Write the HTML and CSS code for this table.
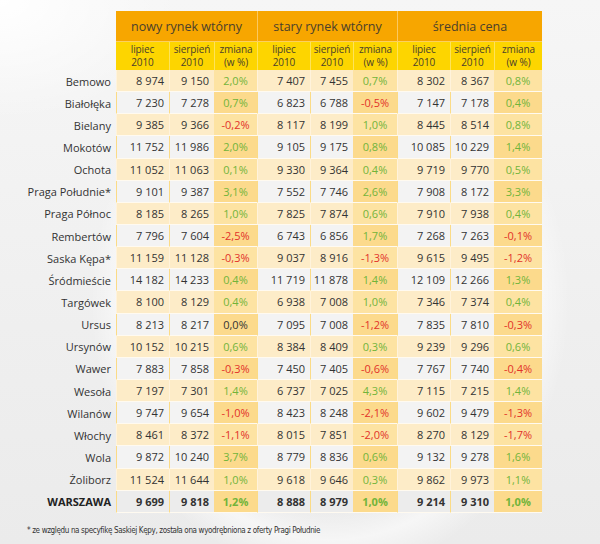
FILE: index.html
```html
<!DOCTYPE html>
<html lang="pl">
<head>
<meta charset="utf-8">
<title>Ceny mieszkań</title>
<link rel="stylesheet" href="styles.css">
</head>
<body>
<div class="page">
  <div class="tbl">
    <div class="row head1">
      <div class="name"></div>
      <div class="grp">nowy rynek wtórny</div>
      <div class="grp">stary rynek wtórny</div>
      <div class="grp">średnia cena</div>
    </div>
    <div class="row head2">
      <div class="name"></div>
      <div>lipiec<br>2010</div><div>sierpień<br>2010</div><div>zmiana<br>(w %)</div>
      <div>lipiec<br>2010</div><div>sierpień<br>2010</div><div>zmiana<br>(w %)</div>
      <div>lipiec<br>2010</div><div>sierpień<br>2010</div><div>zmiana<br>(w %)</div>
    </div>

    <div class="row d odd"><div class="name">Bemowo</div><div class="n a">8 974</div><div class="n b">9 150</div><div class="p up">2,0%</div><div class="n a">7 407</div><div class="n b">7 455</div><div class="p up">0,7%</div><div class="n a">8 302</div><div class="n b">8 367</div><div class="p up">0,8%</div></div>
    <div class="row d even"><div class="name">Białołęka</div><div class="n a">7 230</div><div class="n b">7 278</div><div class="p up">0,7%</div><div class="n a">6 823</div><div class="n b">6 788</div><div class="p dn">-0,5%</div><div class="n a">7 147</div><div class="n b">7 178</div><div class="p up">0,4%</div></div>
    <div class="row d odd"><div class="name">Bielany</div><div class="n a">9 385</div><div class="n b">9 366</div><div class="p dn">-0,2%</div><div class="n a">8 117</div><div class="n b">8 199</div><div class="p up">1,0%</div><div class="n a">8 445</div><div class="n b">8 514</div><div class="p up">0,8%</div></div>
    <div class="row d even"><div class="name">Mokotów</div><div class="n a">11 752</div><div class="n b">11 986</div><div class="p up">2,0%</div><div class="n a">9 105</div><div class="n b">9 175</div><div class="p up">0,8%</div><div class="n a">10 085</div><div class="n b">10 229</div><div class="p up">1,4%</div></div>
    <div class="row d odd"><div class="name">Ochota</div><div class="n a">11 052</div><div class="n b">11 063</div><div class="p up">0,1%</div><div class="n a">9 330</div><div class="n b">9 364</div><div class="p up">0,4%</div><div class="n a">9 719</div><div class="n b">9 770</div><div class="p up">0,5%</div></div>
    <div class="row d even"><div class="name">Praga Południe*</div><div class="n a">9 101</div><div class="n b">9 387</div><div class="p up">3,1%</div><div class="n a">7 552</div><div class="n b">7 746</div><div class="p up">2,6%</div><div class="n a">7 908</div><div class="n b">8 172</div><div class="p up">3,3%</div></div>
    <div class="row d odd"><div class="name">Praga Północ</div><div class="n a">8 185</div><div class="n b">8 265</div><div class="p up">1,0%</div><div class="n a">7 825</div><div class="n b">7 874</div><div class="p up">0,6%</div><div class="n a">7 910</div><div class="n b">7 938</div><div class="p up">0,4%</div></div>
    <div class="row d even"><div class="name">Rembertów</div><div class="n a">7 796</div><div class="n b">7 604</div><div class="p dn">-2,5%</div><div class="n a">6 743</div><div class="n b">6 856</div><div class="p up">1,7%</div><div class="n a">7 268</div><div class="n b">7 263</div><div class="p dn">-0,1%</div></div>
    <div class="row d odd"><div class="name">Saska Kępa*</div><div class="n a">11 159</div><div class="n b">11 128</div><div class="p dn">-0,3%</div><div class="n a">9 037</div><div class="n b">8 916</div><div class="p dn">-1,3%</div><div class="n a">9 615</div><div class="n b">9 495</div><div class="p dn">-1,2%</div></div>
    <div class="row d even"><div class="name">Śródmieście</div><div class="n a">14 182</div><div class="n b">14 233</div><div class="p up">0,4%</div><div class="n a">11 719</div><div class="n b">11 878</div><div class="p up">1,4%</div><div class="n a">12 109</div><div class="n b">12 266</div><div class="p up">1,3%</div></div>
    <div class="row d odd"><div class="name">Targówek</div><div class="n a">8 100</div><div class="n b">8 129</div><div class="p up">0,4%</div><div class="n a">6 938</div><div class="n b">7 008</div><div class="p up">1,0%</div><div class="n a">7 346</div><div class="n b">7 374</div><div class="p up">0,4%</div></div>
    <div class="row d even"><div class="name">Ursus</div><div class="n a">8 213</div><div class="n b">8 217</div><div class="p zero">0,0%</div><div class="n a">7 095</div><div class="n b">7 008</div><div class="p dn">-1,2%</div><div class="n a">7 835</div><div class="n b">7 810</div><div class="p dn">-0,3%</div></div>
    <div class="row d odd"><div class="name">Ursynów</div><div class="n a">10 152</div><div class="n b">10 215</div><div class="p up">0,6%</div><div class="n a">8 384</div><div class="n b">8 409</div><div class="p up">0,3%</div><div class="n a">9 239</div><div class="n b">9 296</div><div class="p up">0,6%</div></div>
    <div class="row d even"><div class="name">Wawer</div><div class="n a">7 883</div><div class="n b">7 858</div><div class="p dn">-0,3%</div><div class="n a">7 450</div><div class="n b">7 405</div><div class="p dn">-0,6%</div><div class="n a">7 767</div><div class="n b">7 740</div><div class="p dn">-0,4%</div></div>
    <div class="row d odd"><div class="name">Wesoła</div><div class="n a">7 197</div><div class="n b">7 301</div><div class="p up">1,4%</div><div class="n a">6 737</div><div class="n b">7 025</div><div class="p up">4,3%</div><div class="n a">7 115</div><div class="n b">7 215</div><div class="p up">1,4%</div></div>
    <div class="row d even"><div class="name">Wilanów</div><div class="n a">9 747</div><div class="n b">9 654</div><div class="p dn">-1,0%</div><div class="n a">8 423</div><div class="n b">8 248</div><div class="p dn">-2,1%</div><div class="n a">9 602</div><div class="n b">9 479</div><div class="p dn">-1,3%</div></div>
    <div class="row d odd"><div class="name">Włochy</div><div class="n a">8 461</div><div class="n b">8 372</div><div class="p dn">-1,1%</div><div class="n a">8 015</div><div class="n b">7 851</div><div class="p dn">-2,0%</div><div class="n a">8 270</div><div class="n b">8 129</div><div class="p dn">-1,7%</div></div>
    <div class="row d even"><div class="name">Wola</div><div class="n a">9 872</div><div class="n b">10 240</div><div class="p up">3,7%</div><div class="n a">8 779</div><div class="n b">8 836</div><div class="p up">0,6%</div><div class="n a">9 132</div><div class="n b">9 278</div><div class="p up">1,6%</div></div>
    <div class="row d odd"><div class="name">Żoliborz</div><div class="n a">11 524</div><div class="n b">11 644</div><div class="p up">1,0%</div><div class="n a">9 618</div><div class="n b">9 646</div><div class="p up">0,3%</div><div class="n a">9 862</div><div class="n b">9 973</div><div class="p up">1,1%</div></div>
    <div class="row d even total"><div class="name">WARSZAWA</div><div class="n a">9 699</div><div class="n b">9 818</div><div class="p up">1,2%</div><div class="n a">8 888</div><div class="n b">8 979</div><div class="p up">1,0%</div><div class="n a">9 214</div><div class="n b">9 310</div><div class="p up">1,0%</div></div>
  </div>
  <p class="note">* ze względu na specyfikę Saskiej Kępy, została ona wyodrębniona z oferty Pragi Południe</p>
</div>
</body>
</html>
```

FILE: styles.css
```css
html, body {
  margin: 0;
  padding: 0;
}
body {
  width: 600px;
  height: 544px;
  overflow: hidden;
  font-family: "Open Sans", "Liberation Sans", sans-serif;
  color: #333;
  background:
    radial-gradient(ellipse 260px 300px at 330px 300px, rgba(255,255,255,0) 70%, rgba(255,255,255,0.55) 80%, rgba(255,255,255,0) 92%),
    radial-gradient(ellipse 180px 120px at 0px 0px, #ffffff 0%, rgba(255,255,255,0) 100%),
    linear-gradient(180deg, #f6f6f6 0%, #efefef 60%, #ebebeb 100%);
}
.page {
  padding-top: 11px;
}
.tbl {
  display: flex;
  flex-direction: column;
}
.row {
  display: grid;
  grid-template-columns: 116px 53px 45px 43px 53px 43px 44px 53px 44px 48px;
}
.head1 {
  grid-template-columns: 116px 141px 140px 145px;
  height: 31px;
}
.head1 .grp {
  background: #f7a600;
  border-left: 1px solid #fbc860;
  border-bottom: 1px solid #fbd060;
  display: flex;
  align-items: center;
  justify-content: center;
  font-size: 12.5px;
  color: #4a3f2c;
  box-sizing: border-box;
}
.head1 .grp:nth-child(2) { border-left: none; }
.head2 {
  height: 28px;
}
.head2 > div:not(.name) {
  background: #fdd500;
  border-left: 1px solid #fde35a;
  font-size: 10px;
  line-height: 12.5px;
  letter-spacing: -0.1px;
  color: #4a3f2c;
  text-align: center;
  display: flex;
  align-items: center;
  justify-content: center;
  box-sizing: border-box;
  padding-bottom: 1px;
}
.head2 > div:nth-child(2) { border-left: none; }

.d {
  height: 22.15px;
  font-size: 11px;
}
.d > div {
  display: flex;
  align-items: center;
  box-sizing: border-box;
  border-bottom: 1px solid #fffaf0;
}
.d .name {
  justify-content: flex-end;
  padding-right: 5px;
  color: #333;
  border-bottom: none;
}
.d .n {
  justify-content: flex-end;
  padding-right: 5px;
}
.d .p {
  justify-content: center;
}
.odd .n { background: #fdecc8; border-left: 1px solid #fff3dc; }
.even .n { background: #f3f3f3; border-left: 1px solid #fbdb86; }
.odd .p { background: #fde3a2; }
.even .p { background: #fcda8c; }
.up { color: #72b43a; }
.dn { color: #e2322a; }
.zero { color: #333; }
.total .n { background: #ececec; }
.total > div { font-weight: 700; }
.total .name { color: #222; }

.note {
  margin: 13px 0 0;
  padding-left: 27px;
  font-family: "DejaVu Sans", "Liberation Sans", sans-serif;
  font-stretch: condensed;
  font-size: 8px;
  letter-spacing: -0.35px;
  color: #333;
}
```
